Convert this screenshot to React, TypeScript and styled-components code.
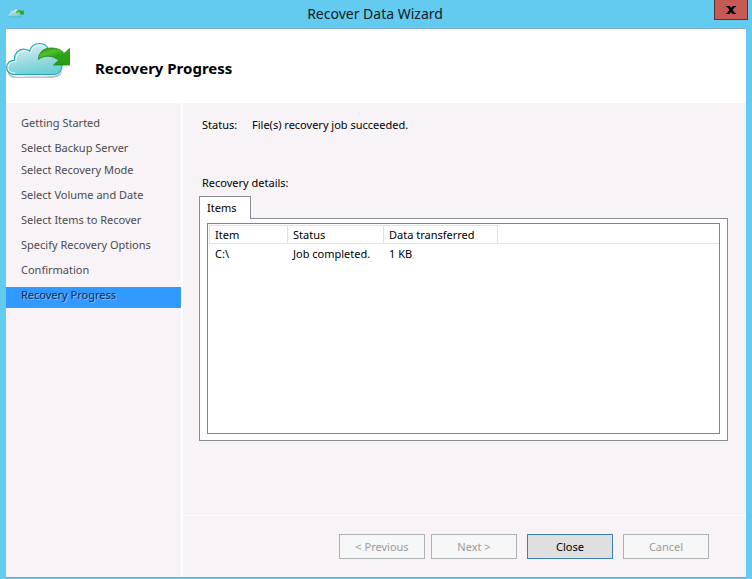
import React, { useId } from "react";
import styled, { createGlobalStyle } from "styled-components";

const Global = createGlobalStyle`
  *, *::before, *::after { box-sizing: border-box; }
  body {
    margin: 0;
    font-family: "Noto Sans", "Open Sans", sans-serif;
    font-size: 11px;
    line-height: 16px;
    color: #000;
    background: #63caf0;
  }
  button { font: inherit; }
`;

const Window = styled.div`
  display: flex;
  flex-direction: column;
  min-height: 100vh;
  padding: 0 6px 1px;
  background: #63caf0;
`;

const TitleBar = styled.header`
  display: grid;
  grid-template-columns: 36px 1fr 38px;
  height: 28px;
`;

const TitleIcon = styled.span`
  padding: 8px 0 0 2px;
  line-height: 0;
`;

const WindowTitle = styled.h1`
  margin: 0;
  font-size: 14px;
  font-weight: 400;
  line-height: 28px;
  text-align: center;
  color: #101c24;
`;

const WindowClose = styled.button`
  width: 34px;
  height: 20px;
  margin-left: 6px;
  padding: 0;
  border: 1px solid #58303a;
  border-top: 0;
  background: #c75a52;
  line-height: 0;
`;

const Frame = styled.div`
  flex: 1;
  display: flex;
  flex-direction: column;
  border-top: 1px solid #7fabcf;
  border-bottom: 1px solid #74aacb;
  background: #f7f3f7;
`;

const Banner = styled.div`
  display: flex;
  align-items: flex-start;
  gap: 24px;
  height: 74px;
  padding-top: 11px;
  background: #fff;
`;

const BannerTitle = styled.h2`
  margin: 0;
  padding-top: 18px;
  font-size: 15px;
  font-weight: 700;
  line-height: 20px;
`;

const Body = styled.div`
  flex: 1;
  display: grid;
  grid-template-columns: 177px 1fr;
`;

const Sidebar = styled.nav`
  display: flex;
  flex-direction: column;
  gap: 1px;
  padding-top: 12px;
  border-right: 2px solid #fff;
`;

const StepList = styled.ol`
  display: grid;
  gap: 4px;
  margin: 0;
  padding: 0;
  list-style: none;
`;

const Step = styled.li<{ $current?: boolean }>`
  height: 21px;
  padding-left: 15px;
  color: ${(p) => (p.$current ? "#0b2f5c" : "#4c4a4d")};
  background: ${(p) => (p.$current ? "#3199ff" : "transparent")};
  text-shadow: ${(p) => (p.$current ? "1px 1px 0 #84bdf5" : "none")};
`;

const Main = styled.main`
  display: flex;
  flex-direction: column;
`;

const Content = styled.section`
  flex: 1;
  padding: 14px 18px 0 16px;
`;

const StatusLine = styled.p`
  display: grid;
  grid-template-columns: 50px 1fr;
  margin: 0 0 42px;
  padding-left: 3px;
`;

const DetailsLabel = styled.p`
  margin: 0 0 5px;
  padding-left: 3px;
`;

const TabStrip = styled.div`
  display: flex;
`;

const Tab = styled.button`
  position: relative;
  z-index: 1;
  width: 52px;
  height: 23px;
  margin-bottom: -1px;
  padding: 0 0 0 7px;
  border: 1px solid #8b8c93;
  border-bottom: 0;
  background: #fff;
  color: #000;
  text-align: left;
`;

const TabPanel = styled.div`
  padding: 4px 7px 6px;
  border: 1px solid #8b8c93;
  background: #fff;
`;

const ListBox = styled.div`
  height: 211px;
  padding: 1px 0 0 1px;
  border: 1px solid #828290;
  background: #fff;
`;

const ItemTable = styled.table`
  width: 100%;
  table-layout: fixed;
  border-collapse: separate;
  border-spacing: 0;
`;

const Column = styled.col<{ $width?: number }>`
  width: ${(p) => (p.$width ? `${p.$width}px` : "auto")};
`;

const HeadCell = styled.th<{ $blank?: boolean }>`
  height: 19px;
  padding: 0 0 0 5px;
  border: 0 solid #e6e1e5;
  border-width: ${(p) => (p.$blank ? "0 0 1px" : "1px 1px 1px 0")};
  font-weight: 400;
  text-align: left;
  white-space: nowrap;

  &:first-child { border-left-width: 1px; }
`;

const Cell = styled.td`
  height: 20px;
  padding: 0 0 0 5px;
  white-space: nowrap;

  &:first-child { padding-left: 6px; }
`;

const Footer = styled.footer`
  display: flex;
  justify-content: flex-end;
  gap: 10px;
  padding: 18px 37px 18px 0;
  border-top: 1px solid #fff;
`;

const ButtonPair = styled.div`
  display: flex;
  gap: 6px;
`;

const ActionButton = styled.button`
  width: 86px;
  height: 25px;
  padding: 0;
  border: 1px solid #3c7fb1;
  background: #dfdfdf;
  color: #000;

  &:disabled {
    border-color: #adb2b5;
    background: #f7f7f7;
    color: #9c9c9c;
  }
`;

function CloudIcon({ width, height }: { width: number; height: number }) {
  const id = useId();
  return (
    <svg width={width} height={height} viewBox="0 0 65 39" aria-hidden="true">
      <defs>
        <linearGradient id={`${id}c`} x1="0" y1="0" x2="0.3" y2="1">
          <stop offset="0" stopColor="#dff4f7" />
          <stop offset="0.5" stopColor="#addfe6" />
          <stop offset="1" stopColor="#6fd0d8" />
        </linearGradient>
        <linearGradient id={`${id}a`} x1="0" y1="0" x2="0.6" y2="1">
          <stop offset="0" stopColor="#1c8a12" />
          <stop offset="0.35" stopColor="#52bf2c" />
          <stop offset="0.6" stopColor="#2aa816" />
          <stop offset="1" stopColor="#2a9d12" />
        </linearGradient>
      </defs>
      <path d="M2 32C5 38 12 36.500 28 36.500C44 36.500 52 37 56 31C56 37 48 38 44 38H10C5 38 2 36 2 32Z" fill="#7d8c8f" opacity=".55" />
      <path
        d="M9 34.500C4 34.500 .6 32 .6 27.500C.6 23 4 20 8.500 20.300C7.500 13.500 13 8.500 19 9.300C21 9.500 22.500 10 23.500 11C25 6 29 3.500 33.500 3.500C38.500 3.500 42 6.500 43 11C50 10 54 14 54 20C57.500 25 56.500 34.500 47 34.500Z"
        fill={`url(#${id}c)`}
        stroke="#25a6b4"
        strokeWidth="1.2"
      />
      <path
        d="M9 33C4.500 33 2 31 2 27.500C2 24 5 21.500 10 21.800C8.800 15 14 10 19 10.800C21.500 11 23 12 24.500 13.500C25.500 7.500 29 5 33.500 5C38 5 41 8 42 13"
        fill="none"
        stroke="#f0fcfd"
        strokeWidth="1"
      />
      <path
        d="M32.500 19.500C32.500 12 38 8 45 8C51 8 56 10 58 13.500L63.500 8.500V25H47.500L52.500 20.500C48 15.500 38 14.500 32.500 19.500Z"
        fill={`url(#${id}a)`}
        stroke="#178a10"
        strokeWidth=".8"
      />
    </svg>
  );
}

const earlySteps = ["Getting Started", "Select Backup Server"];
const laterSteps = [
  "Select Recovery Mode",
  "Select Volume and Date",
  "Select Items to Recover",
  "Specify Recovery Options",
  "Confirmation",
  "Recovery Progress",
];
const currentStep = "Recovery Progress";
const rows = [{ item: "C:\\", status: "Job completed.", data: "1 KB" }];

export default function App() {
  return (
    <>
      <Global />
      <Window>
        <TitleBar>
          <TitleIcon>
            <CloudIcon width={16} height={10} />
          </TitleIcon>
          <WindowTitle>Recover Data Wizard</WindowTitle>
          <WindowClose type="button" aria-label="Close window">
            <svg width="10" height="8" viewBox="0 0 10 8" aria-hidden="true">
              <path d="M0 0H3.500L5 2L6.500 0H10V1H9L6.500 4L9 7H10V8H6.500L5 6L3.500 8H0V7H1L3.500 4L1 1H0Z" fill="#000" />
            </svg>
          </WindowClose>
        </TitleBar>
        <Frame>
          <Banner>
            <CloudIcon width={65} height={39} />
            <BannerTitle>Recovery Progress</BannerTitle>
          </Banner>
          <Body>
            <Sidebar aria-label="Wizard steps">
              {[earlySteps, laterSteps].map((steps) => (
                <StepList key={steps[0]}>
                  {steps.map((step) => (
                    <Step
                      key={step}
                      $current={step === currentStep}
                      aria-current={step === currentStep ? "step" : undefined}
                    >
                      {step}
                    </Step>
                  ))}
                </StepList>
              ))}
            </Sidebar>
            <Main>
              <Content>
                <StatusLine>
                  <span>Status:</span>
                  <span>File(s) recovery job succeeded.</span>
                </StatusLine>
                <DetailsLabel>Recovery details:</DetailsLabel>
                <TabStrip role="tablist">
                  <Tab type="button" role="tab" id="items-tab" aria-selected="true" aria-controls="items-panel">
                    Items
                  </Tab>
                </TabStrip>
                <TabPanel role="tabpanel" id="items-panel" aria-labelledby="items-tab">
                  <ListBox>
                    <ItemTable>
                      <colgroup>
                        <Column $width={79} />
                        <Column $width={96} />
                        <Column $width={114} />
                        <Column />
                      </colgroup>
                      <thead>
                        <tr>
                          <HeadCell scope="col">Item</HeadCell>
                          <HeadCell scope="col">Status</HeadCell>
                          <HeadCell scope="col">Data transferred</HeadCell>
                          <HeadCell as="td" $blank />
                        </tr>
                      </thead>
                      <tbody>
                        {rows.map((row) => (
                          <tr key={row.item}>
                            <Cell>{row.item}</Cell>
                            <Cell>{row.status}</Cell>
                            <Cell>{row.data}</Cell>
                            <Cell />
                          </tr>
                        ))}
                      </tbody>
                    </ItemTable>
                  </ListBox>
                </TabPanel>
              </Content>
              <Footer>
                <ButtonPair>
                  <ActionButton type="button" disabled>&lt; Previous</ActionButton>
                  <ActionButton type="button" disabled>Next &gt;</ActionButton>
                </ButtonPair>
                <ActionButton type="button">Close</ActionButton>
                <ActionButton type="button" disabled>Cancel</ActionButton>
              </Footer>
            </Main>
          </Body>
        </Frame>
      </Window>
    </>
  );
}
